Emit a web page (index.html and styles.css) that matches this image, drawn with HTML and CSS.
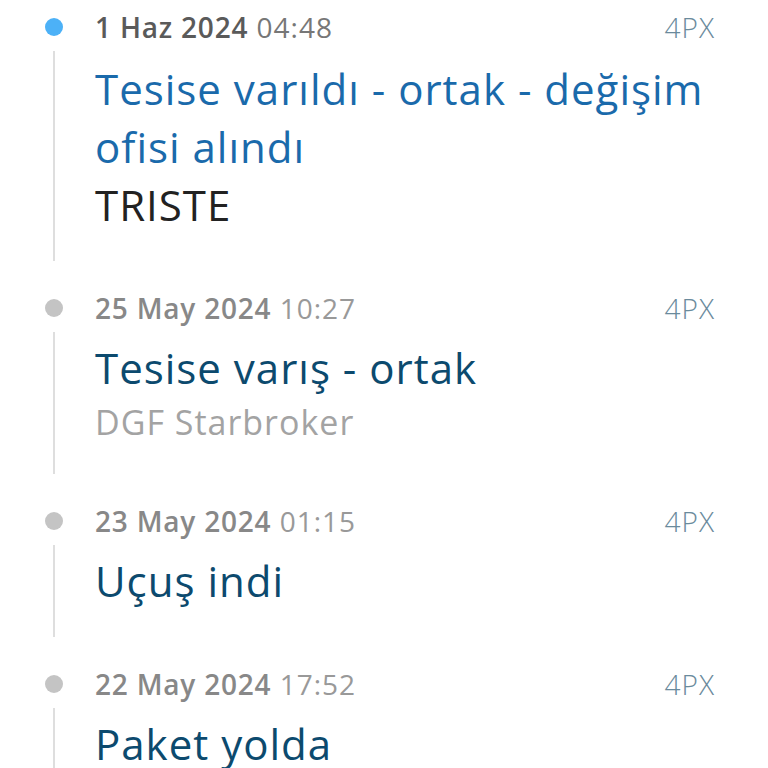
FILE: index.html
```html
<!DOCTYPE html>
<html lang="tr">
<head>
    <meta charset="UTF-8">
    <title>Gönderi takibi</title>
    <link rel="stylesheet" href="styles.css">
</head>
<body>
<ul class="timeline">
    <li class="event active">
        <div class="rail">
            <span class="dot"></span>
            <span class="line"></span>
        </div>
        <div class="content">
            <div class="meta">
                <p class="when"><b>1 Haz 2024</b> 04:48</p>
                <span class="carrier">4PX</span>
            </div>
            <p class="title">Tesise varıldı - ortak - değişim ofisi alındı</p>
            <p class="place dark">TRISTE</p>
        </div>
    </li>
    <li class="event">
        <div class="rail">
            <span class="dot"></span>
            <span class="line"></span>
        </div>
        <div class="content">
            <div class="meta">
                <p class="when"><b>25 May 2024</b> 10:27</p>
                <span class="carrier">4PX</span>
            </div>
            <p class="title">Tesise varış - ortak</p>
            <p class="place">DGF Starbroker</p>
        </div>
    </li>
    <li class="event">
        <div class="rail">
            <span class="dot"></span>
            <span class="line"></span>
        </div>
        <div class="content">
            <div class="meta">
                <p class="when"><b>23 May 2024</b> 01:15</p>
                <span class="carrier">4PX</span>
            </div>
            <p class="title">Uçuş indi</p>
        </div>
    </li>
    <li class="event">
        <div class="rail">
            <span class="dot"></span>
            <span class="line"></span>
        </div>
        <div class="content">
            <div class="meta">
                <p class="when"><b>22 May 2024</b> 17:52</p>
                <span class="carrier">4PX</span>
            </div>
            <p class="title">Paket yolda</p>
        </div>
    </li>
</ul>
</body>
</html>
```

FILE: styles.css
```css
* {
    margin: 0;
    padding: 0;
}

body {
    background: #fff;
    font-family: "Open Sans", "Noto Sans", sans-serif;
    letter-spacing: 1px;
}

.timeline {
    list-style: none;
    padding: 7px 53px 0 45px;
}

.event {
    display: grid;
    grid-template-columns: 18px 1fr;
    column-gap: 32px;
    margin-bottom: 27px;
}

/* 左侧圆点和竖线 */
.rail {
    display: flex;
    flex-direction: column;
    align-items: center;
}

.dot {
    width: 18px;
    height: 18px;
    margin-top: 11px;
    border-radius: 50%;
    background: #c4c4c4;
}

.active .dot {
    background: #4cb1f7;
}

.line {
    flex: 1;
    width: 2px;
    margin-top: 15px;
    background: #dedede;
}

.content {
    padding-bottom: 27px;
}

.meta {
    display: flex;
    justify-content: space-between;
    align-items: center;
    height: 40px;
    margin-bottom: 11px;
}

.active .meta {
    margin-bottom: 13px;
}

.when {
    font-size: 28px;
    color: #999;
}

.when b {
    font-weight: 600;
    letter-spacing: 0.8px;
    color: #888;
}

.active .when {
    color: #777;
}

.active .when b {
    color: #5a5a5a;
}

.carrier {
    font-size: 28px;
    font-weight: 300;
    color: #6a8a9c;
}

.title {
    font-size: 42px;
    line-height: 58px;
    color: #0c4a6e;
}

.active .title {
    color: #1a6aab;
}

.place {
    font-size: 34px;
    line-height: 50px;
    color: #a3a3a3;
}

.place.dark {
    font-size: 42px;
    line-height: 58px;
    color: #222;
}
```
